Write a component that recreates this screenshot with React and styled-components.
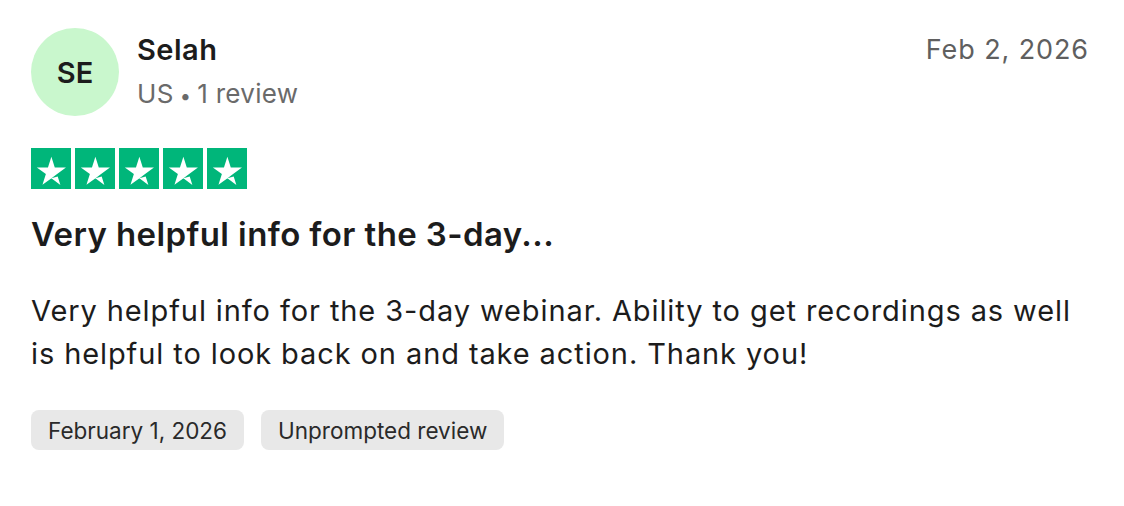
import React from "react";
import styled, { createGlobalStyle } from "styled-components";

const Global = createGlobalStyle`
  html, body {
    margin: 0;
    padding: 0;
    background: #fff;
  }
  body {
    font-family: Inter, "Liberation Sans", sans-serif;
    color: #1c1c1c;
  }
`;

const Card = styled.article`
  width: 1124px;
  height: 506px;
  box-sizing: border-box;
  padding: 28px 35px 0 31px;
`;

const Header = styled.header`
  display: flex;
  align-items: flex-start;
`;

const Avatar = styled.div`
  width: 88px;
  height: 88px;
  border-radius: 50%;
  background: #c9f7cd;
  display: flex;
  align-items: center;
  justify-content: center;
  font-size: 29px;
  font-weight: 600;
  color: #1c1c1c;
  flex-shrink: 0;
`;

const Consumer = styled.div`
  margin-left: 18px;
  display: flex;
  flex-direction: column;
  flex: 1;
`;

const Name = styled.span`
  font-size: 29px;
  font-weight: 600;
  line-height: 44px;
  letter-spacing: 0.5px;
`;

const Meta = styled.span`
  font-size: 26px;
  line-height: 44px;
  color: #6a6a6a;
  letter-spacing: 0.3px;
`;

const Dot = styled.span`
  margin: 0 6px;
  font-size: 20px;
`;

const PostedOn = styled.time`
  font-size: 27px;
  line-height: 44px;
  color: #5f5f5f;
  letter-spacing: 0.9px;
`;

const Stars = styled.div`
  display: flex;
  gap: 4px;
  margin-top: 30px;
`;

const StarBox = styled.svg`
  width: 40px;
  height: 41px;
  display: block;
`;

const Title = styled.h2`
  margin: 23px 0 0;
  font-size: 33px;
  font-weight: 600;
  line-height: 44px;
  letter-spacing: 0.4px;
`;

const Body = styled.p`
  margin: 33px 0 0;
  font-size: 29px;
  line-height: 43px;
  letter-spacing: 0.9px;
`;

const Tags = styled.div`
  display: flex;
  gap: 17px;
  margin-top: 35px;
`;

const Tag = styled.span`
  height: 40px;
  display: inline-flex;
  align-items: center;
  padding: 0 17px;
  border-radius: 8px;
  background: #e8e8e8;
  font-size: 22.5px;
  color: #2a2a2a;
`;

function Star() {
  return (
    <StarBox viewBox="0 0 96 96" preserveAspectRatio="none">
      <rect width="96" height="96" fill="#00b67a" />
      <path
        fill="#fff"
        d="M48.9 70.7l15.2-3.9 6.4 19.6-21.6-15.7zm35-25.3H57.1L48.9 20.2l-8.2 25.2H14l21.7 15.6-8.2 25.2 21.7-15.6 13.4-9.6 21.3-15.4z"
      />
    </StarBox>
  );
}

export default function App() {
  return (
    <>
      <Global />
      <Card>
        <Header>
          <Avatar>SE</Avatar>
          <Consumer>
            <Name>Selah</Name>
            <Meta>
              US<Dot>•</Dot>1 review
            </Meta>
          </Consumer>
          <PostedOn>Feb 2, 2026</PostedOn>
        </Header>
        <Stars>
          {[0, 1, 2, 3, 4].map((i) => (
            <Star key={i} />
          ))}
        </Stars>
        <Title>Very helpful info for the 3-day...</Title>
        <Body>
          Very helpful info for the 3-day webinar. Ability to get recordings as
          well is helpful to look back on and take action. Thank you!
        </Body>
        <Tags>
          <Tag>February 1, 2026</Tag>
          <Tag>Unprompted review</Tag>
        </Tags>
      </Card>
    </>
  );
}
